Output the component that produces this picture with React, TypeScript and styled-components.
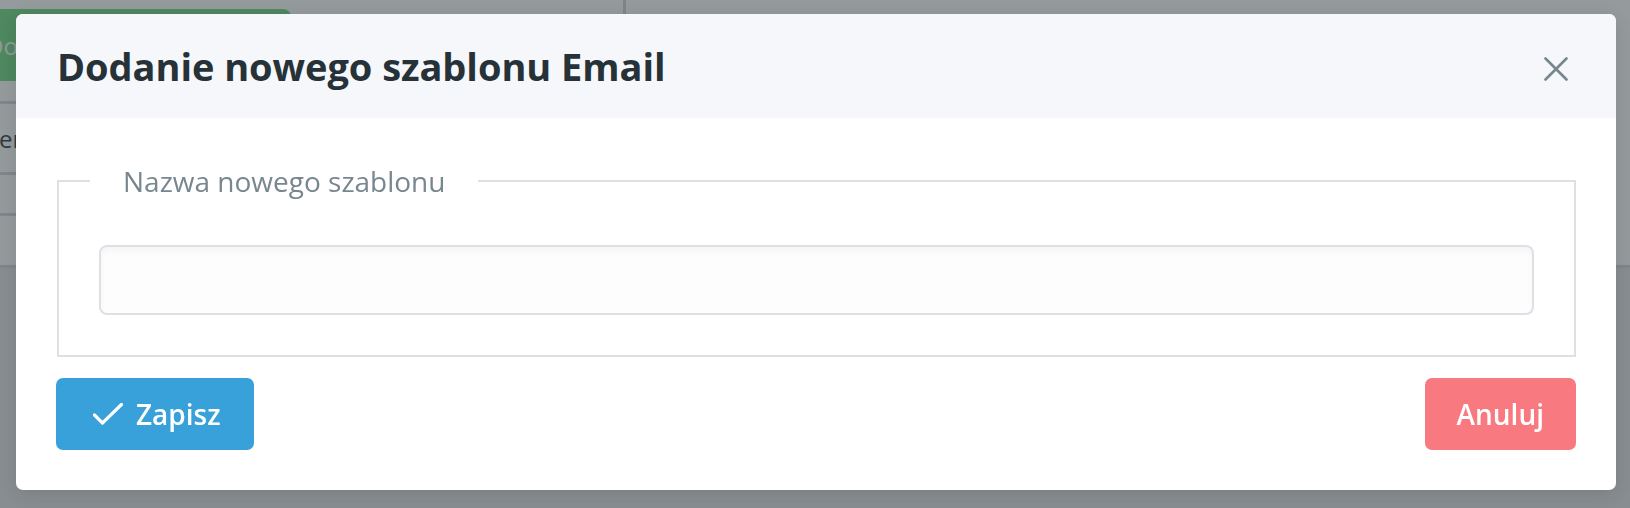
import React from "react";
import styled, { createGlobalStyle } from "styled-components";

const GlobalStyle = createGlobalStyle`
  html, body {
    margin: 0;
    padding: 0;
    width: 1630px;
    height: 508px;
    overflow: hidden;
    background: #e6e8ea;
    font-family: "Open Sans", "Noto Sans", sans-serif;
  }
  * { box-sizing: border-box; }
`;

/* ---------- underlying page (scrolled a bit to the right) ---------- */
const Page = styled.div`
  margin-left: -56px;
  width: 1760px;
  height: 508px;
  background: #e6e8ea;
`;

const Toolbar = styled.div`
  display: flex;
  align-items: stretch;
  height: 81px;
  background: #ffffff;
  padding-top: 9px;
`;

const AddButton = styled.div`
  display: flex;
  align-items: center;
  width: 347px;
  height: 72px;
  padding-left: 42px;
  border-radius: 0 8px 0 0;
  background: #7fe090;
  color: #f6fbf7;
  font-size: 24px;
  font-weight: 400;
`;

const ToolbarDivider = styled.div`
  width: 3px;
  margin-left: 332px;
  margin-top: -9px;
  background: #d6dadd;
`;

const TablePanel = styled.div`
  display: grid;
  grid-template-columns: 679px 1fr;
  background: #ffffff;
  padding-top: 20px;
  border-bottom: 3px solid #d8dcdf;
`;

const TableColumn = styled.div`
  display: flex;
  flex-direction: column;
  border-top: 3px solid #d8dcdf;
`;

const Cell = styled.div<{ $h: number }>`
  height: ${(p) => p.$h}px;
  display: flex;
  align-items: center;
  padding-left: 0;
  border-bottom: 3px solid #d8dcdf;
  color: #42545e;
  font-size: 24px;

  &:last-child {
    border-bottom: none;
  }
`;

/* ---------- overlay + modal ---------- */
const Overlay = styled.div`
  position: fixed;
  inset: 0;
  background: rgba(20, 30, 35, 0.45);
  display: flex;
  align-items: flex-start;
  padding: 14px 0 0 16px;
`;

const Modal = styled.div`
  width: 1600px;
  height: 476px;
  background: #ffffff;
  border-radius: 7px;
  overflow: hidden;
  display: flex;
  flex-direction: column;
  box-shadow: 0 4px 18px rgba(0, 0, 0, 0.12);
`;

const Header = styled.div`
  height: 104px;
  flex: none;
  display: flex;
  align-items: center;
  justify-content: space-between;
  padding: 0 48px 0 41px;
  background: #f5f7fa;
`;

const Title = styled.h2`
  margin: 0;
  font-size: 38px;
  font-weight: 700;
  color: #263238;
  letter-spacing: -0.05px;
`;

const CloseButton = styled.button`
  width: 24px;
  height: 24px;
  padding: 0;
  border: none;
  background: transparent;
  display: flex;
  align-items: center;
  justify-content: center;
  cursor: pointer;
  margin-top: 5px;
`;

const Body = styled.div`
  flex: 1;
  display: flex;
  flex-direction: column;
  padding: 42px 40px 40px 41px;
`;

const FieldSet = styled.fieldset`
  margin: 0;
  padding: 43px 40px 40px 40px;
  border: 2px solid #dde1e5;
  min-width: 0;
`;

const Legend = styled.legend`
  margin-left: -9px;
  padding: 0 33px;
  font-size: 28px;
  line-height: 42px;
  color: #78878f;
  font-weight: 400;
`;

const TextInput = styled.input`
  display: block;
  width: 100%;
  height: 70px;
  border: 2px solid #dde1e5;
  border-radius: 8px;
  background: #fdfdfd;
  box-shadow: inset 0 4px 6px rgba(0, 0, 0, 0.035);
  font-family: inherit;
  font-size: 26px;
  padding: 0 18px;
  outline: none;
`;

const Footer = styled.div`
  margin-top: 21px;
  display: flex;
  justify-content: space-between;
  margin-left: -1px;
`;

const ActionButton = styled.button<{ $variant: "save" | "cancel" }>`
  height: 72px;
  display: flex;
  align-items: center;
  gap: 13px;
  border: none;
  border-radius: 7px;
  padding: ${(p) => (p.$variant === "save" ? "0 33px 0 37px" : "0 32px")};
  background: ${(p) => (p.$variant === "save" ? "#38a1d9" : "#f8797f")};
  color: #ffffff;
  font-family: "Open Sans", "Noto Sans", sans-serif;
  font-size: 28px;
  font-weight: 600;
  cursor: pointer;
`;

const CheckIcon = () => (
  <svg width="30" height="22" viewBox="0 0 30 22" fill="none">
    <polyline
      points="1.5,12 9.5,20 28.5,1.5"
      stroke="#ffffff"
      strokeWidth="3.2"
      strokeLinecap="round"
      strokeLinejoin="round"
    />
  </svg>
);

const CloseIcon = () => (
  <svg width="24" height="24" viewBox="0 0 24 24" fill="none">
    <path
      d="M1.5 1.5 L22.5 22.5 M22.5 1.5 L1.5 22.5"
      stroke="#78868d"
      strokeWidth="2.6"
      strokeLinecap="round"
    />
  </svg>
);

export default function App() {
  return (
    <>
      <GlobalStyle />
      <Page>
        <Toolbar>
          <AddButton>Dodaj nowy szablon</AddButton>
          <ToolbarDivider />
        </Toolbar>
        <TablePanel>
          <TableColumn>
            <Cell $h={71}>Numer szablonu</Cell>
            <Cell $h={41} />
            <Cell $h={49} />
          </TableColumn>
          <div />
        </TablePanel>
      </Page>
      <Overlay>
        <Modal role="dialog" aria-modal="true">
          <Header>
            <Title>Dodanie nowego szablonu Email</Title>
            <CloseButton aria-label="Zamknij">
              <CloseIcon />
            </CloseButton>
          </Header>
          <Body>
            <FieldSet>
              <Legend>Nazwa nowego szablonu</Legend>
              <TextInput type="text" />
            </FieldSet>
            <Footer>
              <ActionButton $variant="save">
                <CheckIcon />
                Zapisz
              </ActionButton>
              <ActionButton $variant="cancel">Anuluj</ActionButton>
            </Footer>
          </Body>
        </Modal>
      </Overlay>
    </>
  );
}
